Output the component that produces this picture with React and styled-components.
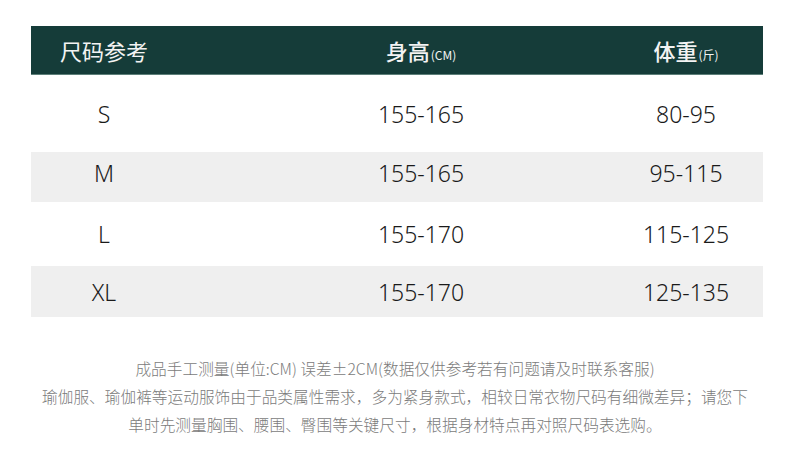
import React from 'react';
import styled, { createGlobalStyle } from 'styled-components';

const GlobalStyle = createGlobalStyle`
    html, body {
        margin: 0;
        padding: 0;
        background: #fff;
    }
    body {
        font-family: "Noto Sans", "Noto Sans CJK SC", sans-serif;
        color: #222;
    }
`;

const Page = styled.div`
    width: 790px;
    height: 474px;
    padding-top: 26px;
    box-sizing: border-box;
    overflow: hidden;
`;

const Table = styled.div`
    width: 732px;
    margin-left: 31px;
`;

// columns share one template; the cells are pushed by left padding
const Row = styled.div`
    display: grid;
    grid-template-columns: 146px 394px 1fr;
    align-items: center;
    height: ${p => p.$h}px;
    padding-bottom: ${p => p.$nudge || 0}px;
    box-sizing: border-box;
    background: ${p => (p.$shaded ? '#efefef' : '#fff')};
    & > :nth-child(2) {
        padding-left: 94px;
    }
    & > :nth-child(3) {
        padding-left: 38px;
    }
`;

const HeadRow = styled(Row)`
    background: #153c39;
    border-bottom: 1px solid #5d7f79;
    color: #f3f3f3;
    & > :first-child {
        text-align: left;
        padding-left: 29px;
    }
`;

const HeadCell = styled.div`
    text-align: center;
    font-family: "Noto Sans CJK SC", sans-serif;
    font-size: 22px;
    font-weight: ${p => (p.$bold ? 500 : 400)};
    white-space: nowrap;
`;

const Unit = styled.span`
    font-size: 12px;
    font-weight: 400;
    margin-left: 1px;
`;

const Cell = styled.div`
    text-align: center;
    font-size: 23px;
    font-weight: 300;
    color: #1a1a1a;
    white-space: nowrap;
`;

const Notes = styled.div`
    margin-top: 38px;
    text-align: center;
    font-family: "Noto Sans CJK SC", sans-serif;
    font-size: 15.7px;
    line-height: 28px;
    color: #7b7b7b;
    font-weight: 300;
`;

const sizes = [
    { size: 'S', height: '155-165', weight: '80-95', h: 77, shaded: false },
    { size: 'M', height: '155-165', weight: '95-115', h: 50, shaded: true, nudge: 8 },
    { size: 'L', height: '155-170', weight: '115-125', h: 64, shaded: false },
    { size: 'XL', height: '155-170', weight: '125-135', h: 51, shaded: true },
];

export default function App() {
    return (
        <Page>
            <GlobalStyle />
            <Table>
                <HeadRow $h={49}>
                    <HeadCell>尺码参考</HeadCell>
                    <HeadCell $bold>身高<Unit>(CM)</Unit></HeadCell>
                    <HeadCell $bold>体重<Unit>(斤)</Unit></HeadCell>
                </HeadRow>
                {sizes.map(row => (
                    <Row key={row.size} $h={row.h} $shaded={row.shaded} $nudge={row.nudge}>
                        <Cell>{row.size}</Cell>
                        <Cell>{row.height}</Cell>
                        <Cell>{row.weight}</Cell>
                    </Row>
                ))}
            </Table>
            <Notes>
                成品手工测量(单位:CM) 误差±2CM(数据仅供参考若有问题请及时联系客服)<br />
                瑜伽服、瑜伽裤等运动服饰由于品类属性需求，多为紧身款式，相较日常衣物尺码有细微差异；请您下<br />
                单时先测量胸围、腰围、臀围等关键尺寸，根据身材特点再对照尺码表选购。
            </Notes>
        </Page>
    );
}
